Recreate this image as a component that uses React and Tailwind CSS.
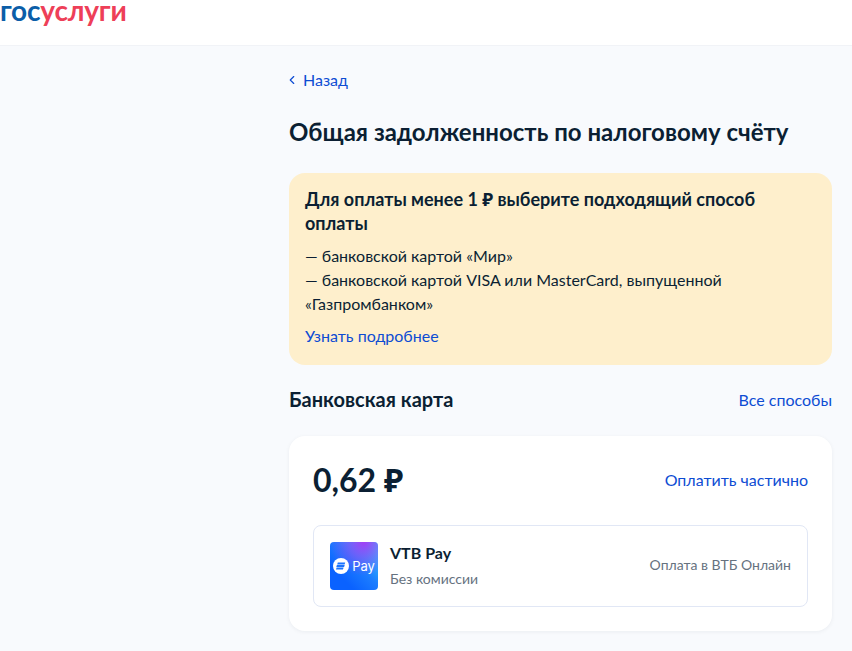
import React from 'react';
import { ChevronLeft } from 'lucide-react';

const Logo = () => (
  <div className="text-[28px] leading-[21px] font-bold tracking-[-0.2px]">
    <span className="text-[#0b5ea8]">гос</span>
    <span className="text-[#ee3f58]">услуги</span>
  </div>
);

const VtbIcon = () => (
  <div className="relative flex h-12 w-12 items-center justify-center gap-[3px] overflow-hidden rounded-[4px] bg-[linear-gradient(45deg,#0a62ff_25%,#1c7dff_55%,#2ccaff_90%)]">
    <div className="absolute inset-0 bg-[radial-gradient(circle_at_70%_0%,#a23df5_0%,rgba(162,61,245,0)_58%)]" />
    <svg className="relative" width="16" height="16" viewBox="0 0 16 16">
      <circle cx="8" cy="8" r="8" fill="#fff" />
      <path d="M4.8 4.6h7.4l-.6 1.8H4.2zM3.9 7.1h7.8l-.6 1.8H3.3zM3.6 9.6h7l-.6 1.8H3z" fill="#1b74ff" />
    </svg>
    <span className="relative font-['Inter',sans-serif] text-[13px] leading-none text-white">Pay</span>
  </div>
);

export default function App() {
  return (
    <div className="h-[651px] overflow-hidden bg-[#f8fafd] font-['Lato','Noto_Sans',sans-serif] text-[#0b1f33]">
      <header className="h-[46px] overflow-hidden border-b border-[#f1f3f7] bg-white">
        <Logo />
      </header>

      <main className="pl-[289px] pr-5 pt-6">
        <a className="flex items-center gap-1 text-base leading-5 text-[#0d4cd3]">
          <ChevronLeft className="-ml-1" size={14} strokeWidth={2} />
          <span>Назад</span>
        </a>

        <h1 className="mt-[26px] text-2xl leading-8 font-bold">
          Общая задолженность по налоговому счёту
        </h1>

        <section className="mt-[25px] rounded-2xl bg-[#feefcc] px-4 pt-[14px] pb-[17px]">
          <p className="text-lg leading-6 font-bold">
            Для оплаты менее 1 ₽ выберите подходящий способ оплаты
          </p>
          <p className="mt-[9px] text-base leading-6">— банковской картой «Мир»</p>
          <p className="text-base leading-6">
            — банковской картой VISA или MasterCard, выпущенной «Газпромбанком»
          </p>
          <a className="mt-2 block text-base leading-6 text-[#0d4cd3]">Узнать подробнее</a>
        </section>

        <div className="mt-[23px] flex items-start justify-between">
          <h2 className="text-xl leading-[22px] font-bold">Банковская карта</h2>
          <a className="text-base leading-6 text-[#0d4cd3]">Все способы</a>
        </div>

        <section className="mt-6 rounded-2xl bg-white p-6 shadow-[0_1px_4px_rgba(11,31,51,0.06)]">
          <div className="flex items-center justify-between">
            <div className="text-[32px] leading-10 font-bold">0,62 ₽</div>
            <a className="text-base leading-6 text-[#0d4cd3]">Оплатить частично</a>
          </div>
          <div className="mt-[25px] flex items-center rounded-lg border border-[#e1e7f5] p-4">
            <VtbIcon />
            <div className="ml-3">
              <div className="text-base leading-5 font-bold">VTB Pay</div>
              <div className="mt-[6px] text-sm leading-5 text-[#66727f]">Без комиссии</div>
            </div>
            <div className="mb-[2px] ml-auto text-sm leading-5 text-[#66727f]">Оплата в ВТБ Онлайн</div>
          </div>
        </section>
      </main>
    </div>
  );
}
